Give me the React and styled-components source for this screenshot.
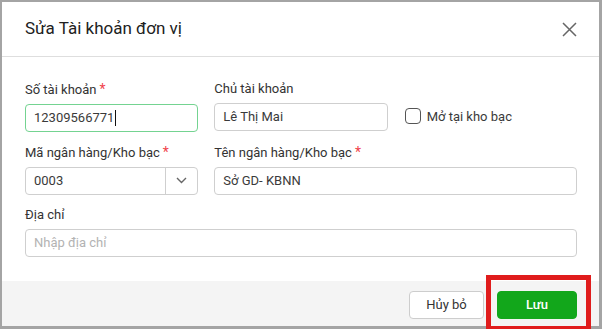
import React from "react";
import styled, { createGlobalStyle } from "styled-components";

const Global = createGlobalStyle`
  html, body { margin: 0; padding: 0; }
  body {
    background: #a4a4a4;
    font-family: Roboto, "Noto Sans", Arial, sans-serif;
    width: 602px;
    height: 329px;
    overflow: hidden;
  }
  * { box-sizing: border-box; }
`;

const Frame = styled.div`
  padding: 2px 3px 3px 2px;
  width: 602px;
  height: 329px;
  position: relative;
`;

const Dialog = styled.div`
  width: 597px;
  height: 324px;
  background: #fff;
  display: flex;
  flex-direction: column;
`;

const Header = styled.div`
  height: 56px;
  border-bottom: 1px solid #dedede;
  display: flex;
  align-items: center;
  justify-content: space-between;
  padding: 0 22px 1px 23px;
`;

const Title = styled.h2`
  margin: 0;
  font-size: 17px;
  line-height: 24px;
  font-weight: 400;
  color: #212121;
`;

const CloseBtn = styled.button`
  border: 0;
  background: transparent;
  padding: 0;
  width: 20px;
  height: 20px;
  display: flex;
  align-items: center;
  justify-content: center;
  margin-right: -2px;
  margin-top: 2px;
`;

const Body = styled.div`
  flex: 1;
  padding: 22px 22px 24px 23px;
  display: grid;
  grid-template-columns: repeat(3, 1fr);
  column-gap: 16px;
  row-gap: 10px;
  align-content: start;
`;

const Field = styled.div`
  grid-column: span ${(p) => p.span || 1};
  display: flex;
  flex-direction: column;
  gap: 4px;
`;

const Label = styled.label`
  font-size: 13px;
  line-height: 20px;
  color: #333;
`;

const Req = styled.span`
  color: #f0434b;
  margin-left: 3px;
  font-size: 14px;
`;

const Input = styled.div`
  height: 28px;
  border: 1px solid ${(p) => (p.focused ? "#74d391" : "#cfcfcf")};
  border-radius: 4px;
  padding: 0 8px;
  display: flex;
  align-items: center;
  font-size: 13px;
  color: ${(p) => (p.placeholder ? "#b3b3b3" : "#3a3a3a")};
  background: #fff;
`;

const Caret = styled.span`
  display: inline-block;
  width: 1px;
  height: 16px;
  background: #111;
  margin-left: 1px;
`;

const Select = styled.div`
  height: 28px;
  border: 1px solid #cfcfcf;
  border-radius: 4px;
  display: flex;
  align-items: stretch;
  font-size: 13px;
  color: #3a3a3a;
`;

const SelectValue = styled.div`
  flex: 1;
  display: flex;
  align-items: center;
  padding: 0 8px;
  border-right: 1px solid #cfcfcf;
`;

const SelectArrow = styled.div`
  width: 31px;
  display: flex;
  align-items: center;
  justify-content: center;
`;

const CheckWrap = styled.div`
  display: flex;
  align-items: center;
  gap: 6px;
  padding-top: 22px;
  font-size: 13px;
  color: #3a3a3a;
`;

const Box = styled.span`
  width: 16px;
  height: 16px;
  border: 1.5px solid #555;
  border-radius: 4px;
  margin-left: 1px;
`;

const Footer = styled.div`
  height: 46px;
  background: #f4f4f4;
  display: flex;
  justify-content: flex-end;
  align-items: flex-start;
  gap: 13px;
  padding: 10px 22px 0 0;
`;

const Button = styled.button`
  height: 28px;
  width: ${(p) => p.w}px;
  border-radius: 4px;
  font-family: Roboto, Arial, sans-serif;
  font-size: 13px;
  border: 1px solid ${(p) => (p.primary ? "#12a71b" : "#cdcdcd")};
  background: ${(p) => (p.primary ? "#12a71b" : "#fff")};
  color: ${(p) => (p.primary ? "#fff" : "#333")};
  font-weight: ${(p) => (p.primary ? 500 : 400)};
  padding: 0;
`;

const Highlight = styled.div`
  position: absolute;
  left: 486px;
  top: 275px;
  width: 105px;
  height: 56px;
  border: 5px solid #e01c1c;
  pointer-events: none;
`;

export default function App() {
  return (
    <>
      <Global />
      <Frame>
        <Dialog>
          <Header>
            <Title>Sửa Tài khoản đơn vị</Title>
            <CloseBtn aria-label="close">
              <svg width="15" height="15" viewBox="0 0 15 15">
                <path d="M1 1 L14 14 M14 1 L1 14" stroke="#666" strokeWidth="1.5" />
              </svg>
            </CloseBtn>
          </Header>
          <Body>
            <Field>
              <Label>
                Số tài khoản<Req>*</Req>
              </Label>
              <Input focused>
                12309566771
                <Caret />
              </Input>
            </Field>
            <Field>
              <Label>Chủ tài khoản</Label>
              <Input>Lê Thị Mai</Input>
            </Field>
            <CheckWrap>
              <Box />
              Mở tại kho bạc
            </CheckWrap>
            <Field>
              <Label>
                Mã ngân hàng/Kho bạc<Req>*</Req>
              </Label>
              <Select>
                <SelectValue>0003</SelectValue>
                <SelectArrow>
                  <svg width="11" height="7" viewBox="0 0 11 7">
                    <path d="M1 1 L5.5 5.5 L10 1" stroke="#666" strokeWidth="1.4" fill="none" />
                  </svg>
                </SelectArrow>
              </Select>
            </Field>
            <Field span={2}>
              <Label>
                Tên ngân hàng/Kho bạc<Req>*</Req>
              </Label>
              <Input>Sở GD- KBNN</Input>
            </Field>
            <Field span={3}>
              <Label>Địa chỉ</Label>
              <Input placeholder>Nhập địa chỉ</Input>
            </Field>
          </Body>
          <Footer>
            <Button w={75}>Hủy bỏ</Button>
            <Button primary w={80}>Lưu</Button>
          </Footer>
        </Dialog>
        <Highlight />
      </Frame>
    </>
  );
}
